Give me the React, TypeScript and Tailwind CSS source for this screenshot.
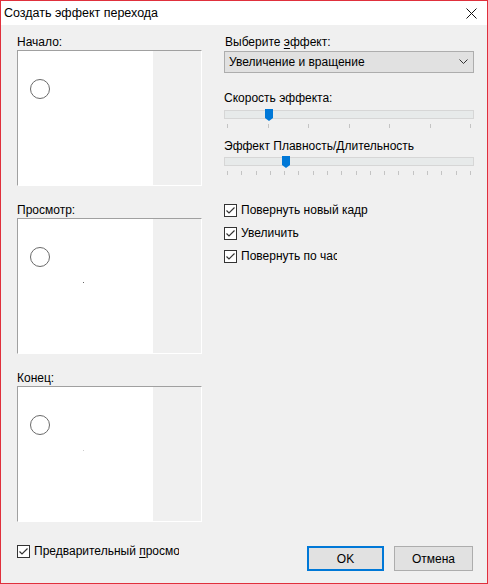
import React from "react";

const font = { fontFamily: '"Liberation Sans", Arial, sans-serif' };

function Preview({ dot }: { dot?: "dark" | "light" }) {
  return (
    <div className="relative flex h-[136px] w-[185px] border border-t-[#a0a0a0] border-l-[#a0a0a0] border-r-white border-b-white">
      <div className="h-full w-[135px] bg-white" />
      <div className="h-full flex-1 bg-[#f0f0f0]" />
      <div className="absolute left-[12px] top-[28px] h-[20px] w-[20px] rounded-full border-[1.5px] border-[#6a6a6a]" />
      {dot === "dark" && <div className="absolute left-[65px] top-[63px] h-px w-px bg-[#666]" />}
      {dot === "light" && <div className="absolute left-[65px] top-[63px] h-px w-px bg-[#ccc]" />}
    </div>
  );
}

function Check({ label, className = "" }: { label: React.ReactNode; className?: string }) {
  return (
    <div className={"flex h-[16px] items-center " + className}>
      <div className="flex h-[13px] w-[13px] shrink-0 items-center justify-center border border-[#333] bg-white">
        <svg width="11" height="11" viewBox="0 0 11 11">
          <path d="M1.5 5.5 L4 8 L9.5 2.5" fill="none" stroke="#333" strokeWidth="1.2" />
        </svg>
      </div>
      <span className="ml-[4px] overflow-hidden whitespace-nowrap">{label}</span>
    </div>
  );
}

function Slider({ pos, ticks }: { pos: number; ticks: number }) {
  return (
    <div className="w-[250px]">
      <div className="relative h-[12px] pt-[1px]">
        <div className="h-[9px] w-full border border-[#d6d6d6] bg-[#e7eaea]" />
        <svg className="absolute top-0" style={{ left: pos - 3.5 }} width="8" height="12" viewBox="0 0 8 12">
          <path d="M0 0 H8 V9 L4 12 L0 9 Z" fill="#0078d7" />
        </svg>
      </div>
      <div className="mt-[3px] flex justify-between px-[3px]">
        {Array.from({ length: ticks }).map((_, i) => (
          <div key={i} className="h-[4px] w-px bg-[#c4c4c4]" />
        ))}
      </div>
    </div>
  );
}

export default function App() {
  return (
    <div
      className="flex h-[584px] w-[488px] flex-col border border-[#e0303c] bg-[#f0f0f0] text-[12px] leading-[16px] text-black"
      style={font}
    >
      <div className="flex h-[24px] shrink-0 items-center justify-between bg-white pl-[3px] pr-[10px]">
        <span className="text-[12.5px]">Создать эффект перехода</span>
        <svg width="11" height="11" viewBox="0 0 11 11">
          <path d="M0.5 0.5 L10.5 10.5 M10.5 0.5 L0.5 10.5" stroke="#111" strokeWidth="1" />
        </svg>
      </div>
      <div className="flex flex-1 flex-col px-[16px] pt-[9px]">
        <div className="flex">
          <div className="flex w-[185px] flex-col">
            <div className="h-[16px]">Начало:</div>
            <Preview />
            <div className="mt-[16px] h-[16px]">Просмотр:</div>
            <Preview dot="dark" />
            <div className="mt-[16px] h-[16px]">Конец:</div>
            <Preview dot="light" />
          </div>
          <div className="ml-[22px] flex w-[250px] flex-col">
            <div className="h-[16px] pl-[1px]">
              Выберите <span className="underline underline-offset-2">э</span>ффект:
            </div>
            <div className="mt-[1px] flex h-[22px] items-center justify-between border border-[#adadad] bg-[#e1e1e1] pl-[4px] pr-[5px]">
              <span>Увеличение и вращение</span>
              <svg width="9" height="6" viewBox="0 0 9 6">
                <path d="M0.5 0.5 L4.5 4.5 L8.5 0.5" fill="none" stroke="#333" strokeWidth="1" />
              </svg>
            </div>
            <div className="mt-[17px] h-[16px]">Скорость эффекта:</div>
            <div className="mt-[3px]">
              <Slider pos={44} ticks={7} />
            </div>
            <div className="mt-[10px] h-[16px]">Эффект Плавность/Длительность</div>
            <div className="mt-[2px]">
              <Slider pos={61} ticks={18} />
            </div>
            <div className="mt-[27px] flex flex-col gap-[7px]">
              <Check label="Повернуть новый кадр" />
              <Check label="Увеличить" />
              <Check label={<span className="block w-[96px] overflow-hidden">Повернуть по часовой</span>} />
            </div>
          </div>
        </div>
        <div className="mt-[22px] flex items-start">
          <Check
            className="mt-[-1px]"
            label={
              <span className="block w-[145px] overflow-hidden">
                Предварительный <span className="underline underline-offset-2">п</span>росмотр
              </span>
            }
          />
          <div className="ml-auto mt-[2px] flex gap-[10px]">
            <button className="h-[25px] w-[77px] border-2 border-[#0078d7] bg-[#e1e1e1]">OK</button>
            <button className="mr-[-2px] h-[25px] w-[79px] border border-[#adadad] bg-[#e1e1e1]">Отмена</button>
          </div>
        </div>
      </div>
    </div>
  );
}
